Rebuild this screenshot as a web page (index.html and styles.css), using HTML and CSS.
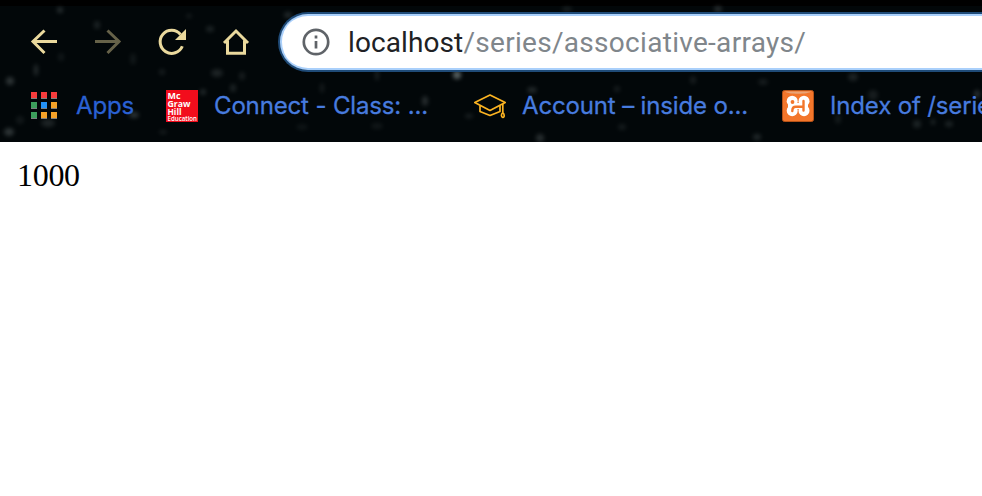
FILE: index.html
```html
<!DOCTYPE html>
<html lang="en">
<head>
<meta charset="utf-8">
<title>localhost/series/associative-arrays/</title>
<link rel="stylesheet" href="styles.css">
</head>
<body>
<header class="browser">
  <svg class="stars" viewBox="0 0 982 142" aria-hidden="true">
    <g fill="#a8b5b5">
      <ellipse cx="60" cy="10" rx="3" ry="3" opacity=".35"/><ellipse cx="97" cy="25" rx="3" ry="4" opacity=".25"/>
      <ellipse cx="210" cy="29" rx="4" ry="3" opacity=".25"/><ellipse cx="189" cy="16" rx="3" ry="2" opacity=".2"/>
      <ellipse cx="36" cy="70" rx="2" ry="6" opacity=".35"/><ellipse cx="10" cy="81" rx="4" ry="4" opacity=".4"/>
      <ellipse cx="61" cy="57" rx="3" ry="4" opacity=".15"/><ellipse cx="133" cy="59" rx="3" ry="6" opacity=".15"/>
      <ellipse cx="162" cy="72" rx="3" ry="3" opacity=".2"/><ellipse cx="217" cy="73" rx="6" ry="4" opacity=".25"/>
      <ellipse cx="242" cy="76" rx="3" ry="4" opacity=".2"/><ellipse cx="203" cy="92" rx="3" ry="3" opacity=".3"/>
      <ellipse cx="233" cy="88" rx="3" ry="4" opacity=".25"/><ellipse cx="134" cy="115" rx="5" ry="3" opacity=".4"/>
      <ellipse cx="48" cy="123" rx="7" ry="4" opacity=".25"/><ellipse cx="9" cy="132" rx="5" ry="4" opacity=".4"/>
      <ellipse cx="20" cy="120" rx="4" ry="4" opacity=".15"/><ellipse cx="163" cy="132" rx="4" ry="2" opacity=".2"/>
      <ellipse cx="288" cy="15" rx="4" ry="3" opacity=".3"/><ellipse cx="377" cy="75" rx="1.5" ry="6" opacity=".3"/>
      <ellipse cx="457" cy="75" rx="4" ry="4" opacity=".8"/><ellipse cx="425" cy="101" rx="3" ry="5" opacity=".35"/>
      <ellipse cx="469" cy="116" rx="4" ry="2" opacity=".25"/><ellipse cx="532" cy="90" rx="5" ry="3" opacity=".3"/>
      <ellipse cx="322" cy="88" rx="2" ry="5" opacity=".2"/><ellipse cx="540" cy="138" rx="4" ry="4" opacity=".35"/>
      <ellipse cx="377" cy="126" rx="6" ry="3" opacity=".15"/><ellipse cx="302" cy="127" rx="6" ry="3" opacity=".12"/>
      <ellipse cx="567" cy="9" rx="5" ry="2" opacity=".25"/><ellipse cx="718" cy="9" rx="4" ry="3" opacity=".35"/>
      <ellipse cx="693" cy="80" rx="3" ry="4" opacity=".2"/><ellipse cx="763" cy="82" rx="5" ry="3" opacity=".2"/>
      <ellipse cx="617" cy="89" rx="3" ry="3" opacity=".2"/><ellipse cx="622" cy="127" rx="4" ry="3" opacity=".18"/>
      <ellipse cx="757" cy="137" rx="4" ry="3" opacity=".3"/><ellipse cx="853" cy="77" rx="5" ry="4" opacity=".25"/>
      <ellipse cx="873" cy="95" rx="5" ry="5" opacity=".2"/><ellipse cx="917" cy="124" rx="4" ry="4" opacity=".25"/>
      <ellipse cx="933" cy="122" rx="2" ry="3" opacity=".3"/><ellipse cx="949" cy="124" rx="4" ry="3" opacity=".25"/>
      <ellipse cx="977" cy="94" rx="3" ry="4" opacity=".35"/><ellipse cx="838" cy="119" rx="3" ry="5" opacity=".18"/>
    </g>
  </svg>
  <div class="toolbar">
    <nav class="controls">
      <svg class="control" viewBox="0 0 32 32"><path d="M29 15.500H5M16.500 4.500 5 15.500l11.500 11.500"/></svg>
      <svg class="control disabled" viewBox="0 0 32 32"><path d="M3 15.500h24M15.500 4.500 27 15.500 15.500 27"/></svg>
      <svg class="control" viewBox="0 0 32 32"><path d="M26.300 20.200A11.500 11.500 0 1 1 24.500 8.500"/><path class="solid" d="M30 3v11H19z"/></svg>
      <svg class="control" viewBox="0 0 32 32"><path d="M4 17 16 5l12 12M7.500 14.500v12.800h17V14.500"/></svg>
    </nav>
    <div class="address">
      <svg class="info" viewBox="0 0 28 28"><circle cx="14" cy="14" r="12.200"/><path d="M14 13v7.500M14 7.500v3"/></svg>
      <span class="url"><span class="host">localhost</span><span class="path">/series/associative-arrays/</span></span>
    </div>
  </div>
  <div class="bookmarks">
    <div class="bookmark apps">
      <svg class="icon" viewBox="0 0 32 32">
        <path fill="#7c7f80" d="M1 8h6v1H1zm10 0h6v1h-6zm10 0h6v1h-6zM1 18h6v1H1zm10 0h6v1h-6zm10 0h6v1h-6zM1 28h6v1H1zm10 0h6v1h-6zm10 0h6v1h-6z"/>
        <path fill="#f63c3c" d="M1 2h6v6H1zm10 0h6v6h-6zm10 0h6v6h-6z"/>
        <path fill="#3c9f5c" d="M1 12h6v6H1zm0 10h6v6H1z"/><path fill="#2391f5" d="M11 12h6v6h-6z"/><path fill="#f3a128" d="M21 12h6v6h-6zM11 22h6v6h-6zm10 0h6v6h-6z"/>
      </svg>
      <span class="label">Apps</span>
    </div>
    <div class="bookmark connect">
      <svg class="icon" viewBox="0 0 32 32"><path fill="#f20d1c" d="M0 0h32v32H0z"/>
        <g class="publisher"><text x="1.500" y="8.500" textLength="13" lengthAdjust="spacingAndGlyphs">Mc</text><text x="1.500" y="16.500" textLength="23" lengthAdjust="spacingAndGlyphs">Graw</text><text x="1.500" y="24.500" textLength="14" lengthAdjust="spacingAndGlyphs">Hill</text><text class="small" x="1.500" y="30.500" textLength="29.500" lengthAdjust="spacingAndGlyphs">Education</text></g>
      </svg>
      <span class="label">Connect - Class: ...</span>
    </div>
    <div class="bookmark account">
      <svg class="icon" viewBox="0 0 32 32"><g class="cap"><path d="M.8 12.500 16 5l15.200 7.500L16 20.500z"/><path d="M6 15.500v6L16 25.500l10-4v-6M28.800 14v8"/><path d="M28.800 22.500c-2 2-1.700 4.500 0 4.800s2-2.800 0-4.800z"/></g></svg>
      <span class="label">Account – inside o...</span>
    </div>
    <div class="bookmark index">
      <svg class="icon" viewBox="0 0 32 32">
        <rect x=".5" y=".5" width="31" height="31" rx="2" fill="#f3762b" stroke="#b65217"/>
        <path fill="#e9a477" d="M3 1.500h26c-2 3-24 3-26 0z"/>
        <g fill="#fff"><circle cx="10.200" cy="11.200" r="5.500"/><circle cx="22" cy="11.200" r="5.500"/><circle cx="10.200" cy="20.700" r="5.500"/><circle cx="22" cy="20.700" r="5.500"/><path d="M6 13h20v6H6z"/></g>
        <circle cx="10.500" cy="12" r="1.900" fill="#f3762b"/>
        <path class="link" d="M10.300 21c0-3 1-4.200 3.500-4.200H21M21.500 11v9.500"/>
      </svg>
      <span class="label">Index of /series</span>
    </div>
  </div>
</header>
<main class="page">1000</main>
</body>
</html>
```
FILE: styles.css
```css
body { margin: 0; background: #fff; overflow: hidden; }
.browser {
  position: relative;
  box-sizing: border-box;
  height: 142px;
  padding-top: 12px;
  overflow: hidden;
  background: linear-gradient(#000 6px, #020709 6px);
}
.stars { position: absolute; inset: 0; width: 982px; height: 142px; filter: blur(2px); opacity: .65; }
.toolbar { position: relative; display: flex; height: 60px; }
.controls { display: flex; align-items: center; gap: 32px; flex: none; width: 250px; padding-left: 28px; }
.control { flex: none; width: 32px; height: 32px; fill: none; stroke: #ead99d; stroke-width: 3; }
.control .solid { fill: #ead99d; stroke: none; }
.disabled { opacity: .43; }
.address {
  display: flex;
  align-items: center;
  box-sizing: border-box;
  flex: none;
  width: 730px;
  height: 60px;
  padding-left: 22px;
  border: 2px solid #1f4b78;
  border-right: 0;
  border-radius: 30px 0 0 30px;
  background: #fff;
  box-shadow: inset 2px 0 #aad0fb, inset 0 2px #aad0fb, inset 0 -2px #aad0fb;
}
.info { flex: none; width: 28px; height: 28px; margin-right: 18px; fill: none; stroke: #5f6368; stroke-width: 2.7; }
.url { padding-top: 1px; font: 28px/40px Roboto, sans-serif; white-space: nowrap; }
.host { color: #202124; letter-spacing: .1px; }
.path { color: #80868b; letter-spacing: .3px; }
.bookmarks { position: relative; display: flex; width: 1100px; height: 68px; align-items: center; padding-left: 30px; }
.bookmark { display: flex; align-items: center; flex: none; height: 32px; font: 24px/32px Inter, sans-serif; letter-spacing: -.15px; color: #477bdf; white-space: nowrap; }
.label { -webkit-text-stroke: .3px currentColor; }
.icon { flex: none; width: 32px; height: 32px; margin-right: 16px; letter-spacing: 0; }
.apps { width: 136px; color: #2a61d3; }
.apps .icon { margin-right: 14px; }
.connect, .account { width: 308px; }
.publisher { fill: #fff; font: bold 8.6px "Open Sans", sans-serif; }
.publisher .small { font-size: 6.2px; font-weight: 600; }
.cap { fill: none; stroke: #fbb321; stroke-width: 1.7; stroke-linejoin: round; }
.link { fill: none; stroke: #f3762b; stroke-width: 2.4; stroke-linecap: round; }
.page { padding: 15px 17px; font: 32px/37px "Liberation Serif", serif; color: #000; letter-spacing: -.3px; }
```
